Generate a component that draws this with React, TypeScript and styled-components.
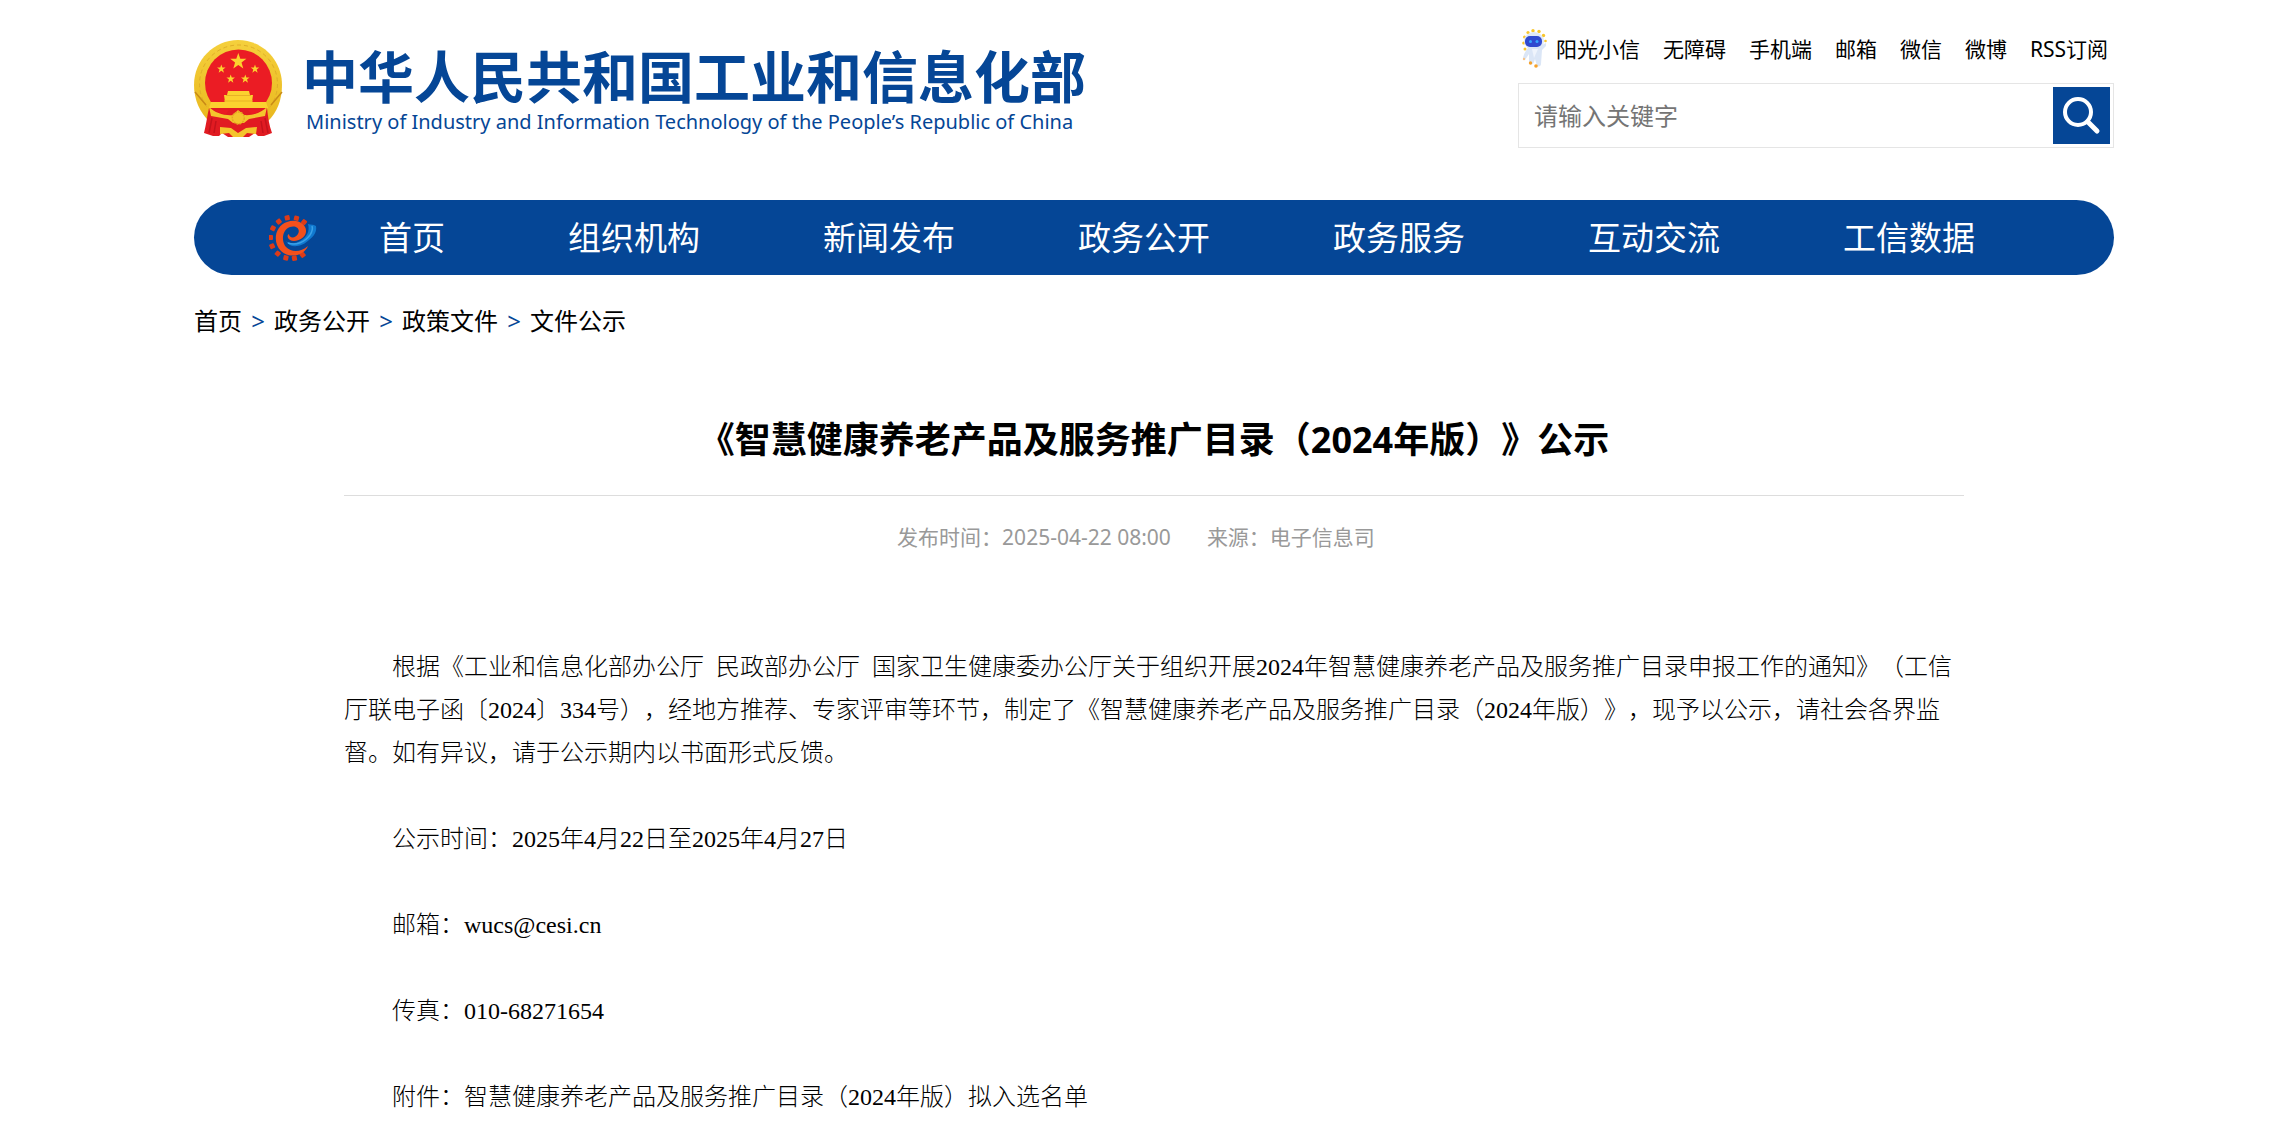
import React from "react";
import styled, { createGlobalStyle } from "styled-components";

const blue = "#054696";
const sans = `"Noto Sans", "Noto Sans CJK SC", sans-serif`;

const GlobalStyle = createGlobalStyle`
  * { box-sizing: border-box; }
  body {
    margin: 0;
    background: #fff;
    color: #000;
    font-family: ${sans};
    text-spacing-trim: space-all;
  }
  a { color: inherit; text-decoration: none; }
`;

const Page = styled.div`
  padding: 0 176px 0 194px;
`;

const Header = styled.header`
  display: flex;
  justify-content: space-between;
  align-items: flex-start;
  height: 200px;
`;

const Brand = styled.a`
  display: flex;
  gap: 18px;
  padding-top: 40px;
  color: ${blue};
`;

const BrandText = styled.span`
  display: flex;
  flex-direction: column;
`;

const BrandName = styled.span`
  font: 700 56px/68px "Noto Sans CJK SC", sans-serif;
  white-space: nowrap;
`;

const BrandSub = styled.span`
  padding-left: 4px;
  font: 400 20px/28px ${sans};
  white-space: nowrap;
`;

const Tools = styled.div`
  width: 596px;
  padding-top: 27px;
`;

const QuickLinks = styled.nav`
  display: flex;
  align-items: center;
  gap: 23px;
  height: 44px;
  padding-left: 4px;
  font-size: 21px;
  line-height: 44px;
  white-space: nowrap;
`;

const MascotLink = styled.a`
  display: flex;
  align-items: center;
  gap: 8px;
`;

const SearchBox = styled.form`
  display: flex;
  align-items: center;
  height: 65px;
  margin-top: 12px;
  padding-right: 3px;
  border: 1px solid #e5e5e5;
`;

const SearchInput = styled.input`
  flex: 1;
  min-width: 0;
  height: 57px;
  padding: 0 15px;
  border: 0;
  outline: 0;
  background: transparent;
  font: 24px/57px ${sans};
  &::placeholder { color: #757575; opacity: 1; }
`;

const SearchButton = styled.button`
  display: grid;
  place-items: center;
  width: 57px;
  height: 57px;
  padding: 0;
  border: 0;
  background: ${blue};
`;

const MainNav = styled.nav`
  display: flex;
  align-items: center;
  height: 75px;
  padding-left: 75px;
  border-radius: 38px;
  background: ${blue};
  color: #fff;
`;

const NavList = styled.ul`
  display: flex;
  gap: 123px;
  margin: 0;
  padding: 0 0 0 62px;
  list-style: none;
  font-size: 33px;
  line-height: 76px;
  white-space: nowrap;
`;

const Crumbs = styled.nav`
  display: flex;
  gap: 8px;
  padding-top: 24px;
  font-size: 24px;
  line-height: 44px;
`;

const CrumbMark = styled.span`
  width: 16px;
  text-align: center;
  color: ${blue};
`;

const Article = styled.article`
  margin: 0 150px;
`;

const Title = styled.h1`
  margin: 0;
  padding: 69px 0 27px;
  border-bottom: 1px solid #ddd;
  font-size: 36px;
  line-height: 56px;
  text-align: center;
`;

const Meta = styled.div`
  display: flex;
  justify-content: center;
  padding-top: 20px;
  font-size: 21px;
  line-height: 43px;
  color: #999;
`;

const MetaItem = styled.span`
  margin-right: 36px;
`;

const Body = styled.div`
  padding: 87px 0 18px;
  font: 300 24px/43px "Liberation Serif", "Noto Sans CJK SC", serif;
`;

const Paragraph = styled.p`
  margin: 0 0 43px;
  text-indent: 48px;
`;

function star(cx: number, cy: number, r: number) {
  return Array.from({ length: 10 }, (_, i) => {
    const a = (i * Math.PI) / 5 - Math.PI / 2;
    const q = i % 2 ? r * 0.4 : r;
    return `${cx + q * Math.cos(a)},${cy + q * Math.sin(a)}`;
  }).join(" ");
}

const Emblem = () => (
  <svg width="90" height="98" viewBox="0 0 90 98" aria-hidden="true">
    <defs>
      <linearGradient id="gold" x1="0" y1="0" x2="0" y2="1">
        <stop offset="0" stopColor="#f5d03c" />
        <stop offset="1" stopColor="#e9b81f" />
      </linearGradient>
    </defs>
    <path d="M44 0C20 0 0 20 0 45c0 15 6 28 16 37h57c10-9 15-22 15-37C88 20 68 0 44 0z" fill="url(#gold)" />
    <ellipse cx="44.5" cy="44" rx="39" ry="39" fill="none" stroke="#dfae28" strokeWidth="1" strokeDasharray="4 3" />
    <path d="M1 52l11 13M88 52L77 65" stroke="#c88a17" strokeWidth="1.5" />
    <circle cx="44.5" cy="43" r="33.5" fill="#eb1c24" />
    <g fill="#fbd22f">
      <polygon points={star(44.3, 21.5, 8.5)} />
      <polygon points={star(27.3, 29, 4.5)} />
      <polygon points={star(61, 29, 4.5)} />
      <polygon points={star(36.7, 39, 4.5)} />
      <polygon points={star(51.3, 39, 4.5)} />
      <path d="M34 51h21l1 4h3l-1 7h14l2 6-5 3H20l-5-3 2-6h14l-1-7h3z" />
    </g>
    <path d="M32 55.5h25M30 61h29" stroke="#e8b325" strokeWidth="1" />
    <path d="M15 68c-2 9-3 17-5 25l9 3h6l3-3 6 4h21l6-4 3 3h6l8-3c-3-8-4-16-5-25z" fill="#e11b22" />
    <path d="M15 67c6 6 16 9 24 8l5-5 6 5c9 1 18-3 23-8l-2 9-16 3-5 4H39l-5-4-17-3z" fill="#f4c52d" />
    <path d="M21 70h14l-3 4c-4 0-8-2-11-4zM54 70h14c-3 2-7 4-11 4z" fill="#eb1c24" />
    <circle cx="44.3" cy="78" r="6" fill="#f4c52d" stroke="#e3a921" strokeWidth="1.5" strokeDasharray="2 1" />
    <path d="M26 87l11 1 7 5 8-5 11-1-1 7-9-1-4 4H39l-4-4-9 1z" fill="#f4c52d" />
    <path d="M18 78l-3 15M22 81l-2 12M71 78l3 15M67 81l2 12" stroke="#c4131c" strokeWidth="1.5" />
  </svg>
);

const Mascot = () => (
  <svg width="26" height="40" viewBox="0 0 26 40" aria-hidden="true">
    <g fill="#f9c62c">
      <circle cx="6" cy="3.5" r="1.6" />
      <circle cx="11" cy="1.8" r="1.7" />
      <circle cx="17" cy="2.5" r="1.7" />
      <circle cx="21.5" cy="6.5" r="1.7" />
      <circle cx="2.5" cy="8" r="1.5" />
      <circle cx="1.7" cy="14" r="1.5" />
      <circle cx="3" cy="20" r="1.5" />
      <circle cx="23.5" cy="12" r="1.3" />
    </g>
    <ellipse cx="12" cy="12" rx="10" ry="9" fill="#dfe8f7" />
    <path d="M7 18c-3 3-6 8-6 12l2 1 4-6 0 9c1 2 4 2 5-1l1-3 2 7c2 1 4 0 4-2l1-14 4-4 0-3-6 3z" fill="#dbe6f6" />
    <path d="M10 20l2 9 4-9z" fill="#eff4fc" />
    <rect x="3" y="7" width="17" height="11" rx="5" fill="#3049cf" />
    <circle cx="8.5" cy="12.5" r="1.5" fill="#35a5ff" />
    <circle cx="15" cy="12.5" r="1.5" fill="#35a5ff" />
    <circle cx="8.5" cy="34" r="1.7" fill="#f6a22b" />
    <circle cx="14" cy="37" r="1.8" fill="#f6a22b" />
    <circle cx="2" cy="30" r="1.2" fill="#f6c48b" />
  </svg>
);

const GearLogo = () => (
  <svg width="48" height="48" viewBox="0 0 48 48" aria-hidden="true">
    <g fill="#dc3b18">
      {[-76, -102, -128, -153, -180, 155, 129, 103, 79, 54, -52].map((deg) => (
        <rect key={deg} x="18" y="-2" width="5" height="5" rx="1" transform={`translate(22 24) rotate(${deg})`} />
      ))}
    </g>
    <path d="M17 27c3 3 9 3 14 0 7-4 10-10 8-17 3 1 5 0 8 2 1 6-2 10-7 14-7 7-19 9-23 1z" fill="#1179cf" />
    <path d="M19 29c8 3 17-1 22-8 2-3 3-6 2-9" fill="none" stroke="#3aa1e8" strokeWidth="1.5" />
    <path
      d="M39 32C35 42 20 45 12 37 3 28 6 12 18 8c10-4 20 2 19 10-1 7-11 11-16 8-3-2-3-5-1-6 0 4 6 5 9 0 3-6-3-9-8-7-8 3-9 14-4 20 6 6 15 5 22-1z"
      fill="#f3501c"
    />
  </svg>
);

const SearchIcon = () => (
  <svg width="38" height="38" viewBox="0 0 38 38" fill="none" stroke="#fff" strokeLinecap="round" aria-hidden="true">
    <circle cx="15" cy="15" r="13" strokeWidth="4" />
    <path d="M25 25l9 9" strokeWidth="5" />
  </svg>
);

const quickLinks = ["无障碍", "手机端", "邮箱", "微信", "微博", "RSS订阅"];
const navItems = ["首页", "组织机构", "新闻发布", "政务公开", "政务服务", "互动交流", "工信数据"];
const crumbs = ["首页", "政务公开", "政策文件", "文件公示"];
const paragraphs = [
  "根据《工业和信息化部办公厅\u2002民政部办公厅\u2002国家卫生健康委办公厅关于组织开展2024年智慧健康养老产品及服务推广目录申报工作的通知》（工信厅联电子函〔2024〕334号），经地方推荐、专家评审等环节，制定了《智慧健康养老产品及服务推广目录（2024年版）》，现予以公示，请社会各界监督。如有异议，请于公示期内以书面形式反馈。",
  "公示时间：2025年4月22日至2025年4月27日",
  "邮箱：wucs@cesi.cn",
  "传真：010-68271654",
  "附件：智慧健康养老产品及服务推广目录（2024年版）拟入选名单",
];

export default function App() {
  return (
    <>
      <GlobalStyle />
      <Page lang="zh-CN">
        <Header>
          <Brand href="#">
            <Emblem />
            <BrandText>
              <BrandName>中华人民共和国工业和信息化部</BrandName>
              <BrandSub>Ministry of Industry and Information Technology of the People’s Republic of China</BrandSub>
            </BrandText>
          </Brand>
          <Tools>
            <QuickLinks>
              <MascotLink href="#">
                <Mascot />
                阳光小信
              </MascotLink>
              {quickLinks.map((t) => (
                <a href="#" key={t}>{t}</a>
              ))}
            </QuickLinks>
            <SearchBox onSubmit={(e) => e.preventDefault()}>
              <SearchInput type="text" aria-label="请输入关键字" placeholder="请输入关键字" />
              <SearchButton type="submit" aria-label="搜索">
                <SearchIcon />
              </SearchButton>
            </SearchBox>
          </Tools>
        </Header>
        <MainNav>
          <GearLogo />
          <NavList>
            {navItems.map((t) => (
              <li key={t}><a href="#">{t}</a></li>
            ))}
          </NavList>
        </MainNav>
        <Crumbs>
          {crumbs.map((t, i) => (
            <React.Fragment key={t}>
              {i > 0 && <CrumbMark>&gt;</CrumbMark>}
              <a href="#">{t}</a>
            </React.Fragment>
          ))}
        </Crumbs>
        <Article>
          <Title>《智慧健康养老产品及服务推广目录（2024年版）》公示</Title>
          <Meta>
            <MetaItem>发布时间：2025-04-22 08:00</MetaItem>
            <MetaItem>来源：电子信息司</MetaItem>
          </Meta>
          <Body>
            {paragraphs.map((t) => (
              <Paragraph key={t}>{t}</Paragraph>
            ))}
          </Body>
        </Article>
      </Page>
    </>
  );
}
